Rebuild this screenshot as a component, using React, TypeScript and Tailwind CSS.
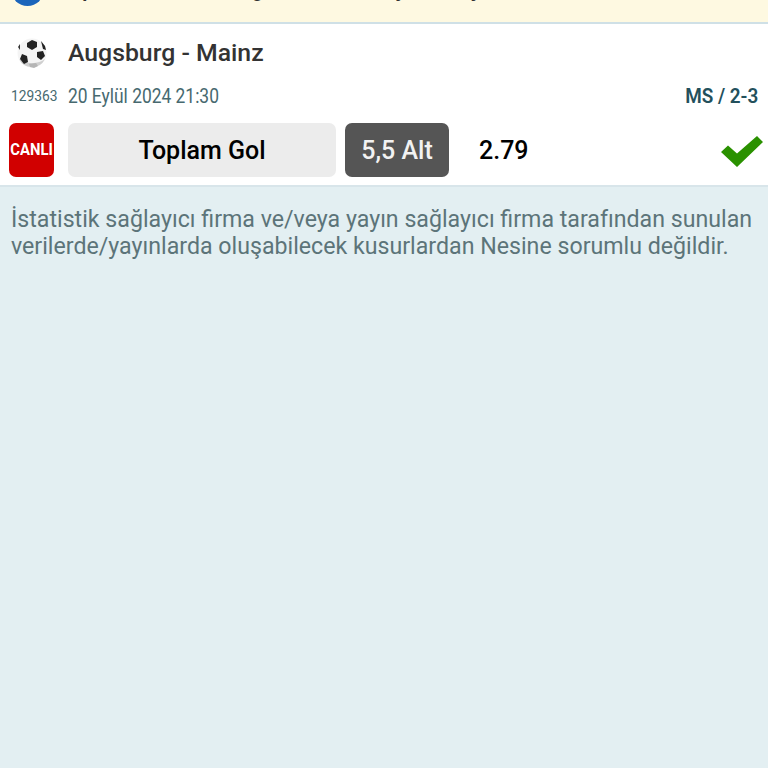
const ROBOTO = "font-['Roboto',sans-serif]";

function Ball() {
  return (
    <svg width="32" height="32" viewBox="0 0 32 32">
      <circle cx="16" cy="16" r="14.5" fill="#f4f4f4" />
      <path d="M3 22a14.5 14.5 0 0 0 26 0a16 10 0 0 1-26 0z" fill="#cfcfcf" />
      <path d="M11 6l5-3 5 2 0 5-5 3-5-3z" fill="#222" />
      <path d="M25 4l4 5 1 4-3-1z" fill="#222" />
      <path d="M21 15l6-1 2 5-4 4-4-3z" fill="#222" />
      <path d="M6 17l5 2 1 6-4 2-4-5z" fill="#222" />
      <path d="M2 10l2-3 0 6z" fill="#333" />
      <path d="M13 27l7-1 2 3-4 2-4-1z" fill="#b5b5b5" />
    </svg>
  );
}

export default function App() {
  return (
    <div className={`${ROBOTO} h-[768px] w-[768px] overflow-hidden bg-[#e3eff2]`}>
      <div className="relative h-[22px] w-full overflow-hidden bg-[#fef9e1]">
        <div className="absolute left-[11px] top-[-27px] h-[33px] w-[33px] rounded-full bg-[#1b65bb]" />
        <div className="absolute left-[68px] top-[-23px] whitespace-nowrap text-[23px] font-medium leading-[24px] text-[#333]">
          Spor verileri ile el genel tablosu yer alır yeni
        </div>
      </div>
      <div className="h-[2px] bg-[#cfe0e6]" />
      <div className="h-[161px] bg-white">
        <div className="flex h-[58px] items-center pl-[16px]">
          <Ball />
          <span className="ml-[20px] text-[24.8px] font-medium leading-[28px] text-[#333]">Augsburg - Mainz</span>
        </div>
        <div className="flex h-[28px] items-center pl-[11px] pr-[10px]">
          <span className="w-[57px] origin-left scale-x-90 text-[15.3px] leading-[18px] text-[#47696f]">129363</span>
          <span className="origin-left scale-x-[0.87] text-[20px] leading-[22px] text-[#47696f]">20 Eylül 2024 21:30</span>
          <span className="ml-auto origin-right scale-x-90 text-[21px] font-semibold leading-[22px] text-[#23505c]">MS / 2-3</span>
        </div>
        <div className="mt-[13px] flex h-[54px] items-center pl-[9px]">
          <div className="flex h-[54px] w-[45px] items-center justify-center rounded-[7px] bg-[#d10000] text-[16.5px] font-bold text-white">
            <span className="scale-x-90">CANLI</span>
          </div>
          <div className="ml-[14px] flex h-[54px] w-[268px] items-center justify-center rounded-[7px] bg-[#ececec] pt-[1px] text-[25px] font-medium text-black">
            Toplam Gol
          </div>
          <div className="ml-[9px] flex h-[54px] w-[104px] items-center justify-center rounded-[7px] bg-[#555555] pt-[1px] text-[25px] font-medium text-[#f2f2f2]">
            5,5 Alt
          </div>
          <span className="ml-[30px] pt-[1px] text-[25px] font-medium text-black">2.79</span>
          <svg className="ml-auto mr-[5px] mt-[3px]" width="42" height="31" viewBox="0 0 42 31">
            <path d="M0 16l7-6.500 9 8L36 0l6 6L16 31z" fill="#2a9100" />
          </svg>
        </div>
      </div>
      <div className="h-[2px] bg-[#d8e5ea]" />
      <p className="px-[11px] pt-[19px] text-[23.18px] leading-[27px] text-[#5c7479]">
        İstatistik sağlayıcı firma ve/veya yayın sağlayıcı firma tarafından sunulan verilerde/yayınlarda oluşabilecek kusurlardan Nesine sorumlu değildir.
      </p>
    </div>
  );
}
